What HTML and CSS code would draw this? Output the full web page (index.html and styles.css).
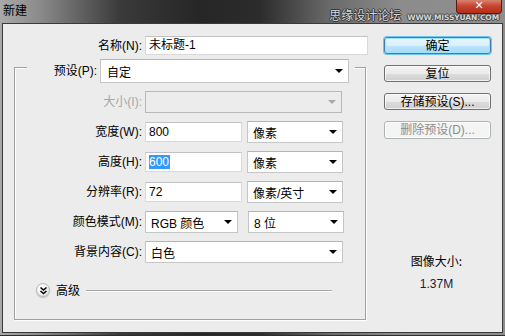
FILE: index.html
```html
<!DOCTYPE html>
<html lang="zh">
<head>
<meta charset="utf-8">
<title>新建</title>
<link rel="stylesheet" href="styles.css">
</head>
<body>
<div class="window">
  <div class="titlebar">
    <span class="title">新建</span>
    <span class="watermark"><span class="wm-cn">思缘设计论坛</span><span class="wm-en">WWW.MISSYUAN.COM</span></span>
    <span class="close">✕</span>
  </div>
  <div class="client">
    <div class="left">
      <div class="row name-row">
        <label class="lbl">名称(N):</label>
        <div class="input w-name">未标题-1</div>
      </div>
      <div class="group">
        <div class="preset-row">
          <label class="lbl">预设(P):</label>
          <div class="select w-preset"><span>自定</span><i class="arrow"></i></div>
        </div>
        <div class="row grow">
          <label class="lbl disabled">大小(I):</label>
          <div class="select w-size disabled-box"><span></span><i class="arrow grey"></i></div>
        </div>
        <div class="row grow">
          <label class="lbl">宽度(W):</label>
          <div class="input w-num">800</div>
          <div class="select w-unit"><span>像素</span><i class="arrow"></i></div>
        </div>
        <div class="row grow">
          <label class="lbl">高度(H):</label>
          <div class="input w-num"><span class="sel">600</span><span class="caret"></span></div>
          <div class="select w-unit"><span>像素</span><i class="arrow"></i></div>
        </div>
        <div class="row grow">
          <label class="lbl">分辨率(R):</label>
          <div class="input w-num">72</div>
          <div class="select w-unit"><span>像素/英寸</span><i class="arrow"></i></div>
        </div>
        <div class="row grow">
          <label class="lbl">颜色模式(M):</label>
          <div class="select w-mode"><span>RGB 颜色</span><i class="arrow"></i></div>
          <div class="select w-unit gap10"><span>8 位</span><i class="arrow"></i></div>
        </div>
        <div class="row grow">
          <label class="lbl">背景内容(C):</label>
          <div class="select w-bg"><span>白色</span><i class="arrow"></i></div>
        </div>
        <div class="advanced">
          <span class="adv-icon"><svg width="9" height="9" viewBox="0 0 9 9"><path d="M1.5 1.5 L4.5 4 L7.5 1.5 M1.5 5 L4.5 7.5 L7.5 5" fill="none" stroke="#000" stroke-width="1.6"/></svg></span>
          <span class="adv-text">高级</span>
          <span class="adv-line"></span>
        </div>
      </div>
    </div>
    <div class="right">
      <button class="btn default">确定</button>
      <button class="btn">复位</button>
      <button class="btn">存储预设(S)...</button>
      <button class="btn disabled-btn">删除预设(D)...</button>
      <div class="info">
        <div class="info-label">图像大小:</div>
        <div class="info-value">1.37M</div>
      </div>
    </div>
  </div>
</div>
</body>
</html>
```

FILE: styles.css
```css
* { box-sizing: border-box; }
html, body { margin: 0; padding: 0; }
body {
  width: 505px;
  height: 336px;
  overflow: hidden;
  font-family: "Liberation Sans", "Noto Sans CJK SC", sans-serif;
  font-size: 12px;
  color: #000;
}
.window {
  width: 505px;
  height: 336px;
  background: linear-gradient(90deg, #a9a9a9 0px, #8a8a8a 40px, #3a3a3a 120px, #262626 200px, #2c2c2c 260px, #6a6a6a 330px, #8c8c8c 400px, #8e8e8e 505px);
  border-bottom: 1px solid #2e2e2e;
  display: flex;
  flex-direction: column;
}
.titlebar {
  height: 23px;
  display: flex;
  align-items: flex-start;
  position: relative;
}
.title {
  margin: 3px 0 0 3px;
  font-size: 12px;
  line-height: 14px;
  color: #000;
  font-family: "Noto Sans CJK SC", sans-serif;
}
.watermark {
  margin-left: auto;
  margin-top: 7px;
  display: flex;
  align-items: baseline;
  gap: 6px;
  margin-right: 6px;
}
.wm-cn {
  font-family: "Noto Sans CJK SC", sans-serif;
  font-size: 12px;
  line-height: 15px;
  color: #d6d6d6;
  text-shadow: 1px 0 #333, -1px 0 #333, 0 1px #333, 0 -1px #333;
}
.wm-en {
  font-family: "DejaVu Sans", sans-serif;
  font-size: 7.5px;
  font-weight: bold;
  letter-spacing: -0.1px;
  color: #d6d6d6;
  text-shadow: 1px 0 #444, -1px 0 #444, 0 1px #444, 0 -1px #444;
}
.close {
  position: absolute;
  right: 3px;
  top: 0;
  width: 46px;
  height: 14px;
  border: 1px solid #5a1a12;
  border-top: none;
  border-radius: 0 0 4px 4px;
  background: linear-gradient(#d9826f 0px, #c5452f 6px, #b22a17 14px);
  color: #fff;
  font-family: "DejaVu Sans", sans-serif;
  font-weight: bold;
  font-size: 11px;
  line-height: 12px;
  text-align: center;
}
.client {
  margin-left: 2px;
  width: 501px;
  height: 310px;
  border: 1px solid #3a3a3a;
  background: #ececec;
  display: flex;
}
.left {
  width: 366px;
  padding-left: 11px;
}
.row {
  display: flex;
  align-items: center;
}
.lbl {
  text-align: right;
  white-space: nowrap;
  line-height: 14px;
  font-family: "Liberation Sans", "Noto Sans CJK SC", sans-serif;
}
.name-row { margin-top: 12px; height: 19px; }
.name-row .lbl { width: 128px; margin-right: 3px; }
.input {
  height: 19px;
  background: #fff;
  border: 1px solid #d9d9d9;
  border-top-color: #c2c2c2;
  padding-left: 3px;
  line-height: 17px;
  white-space: nowrap;
  display: flex;
  align-items: center;
}
.w-name { width: 223px; }
.w-num { width: 97px; height: 20px; }
.sel { background: #3399ff; color: #fff; line-height: 14px; }
.caret { width: 1px; height: 14px; background: #e07020; }
.group {
  margin-top: 12px;
  width: 352px;
  height: 253px;
  border: 1px solid #a0a0a0;
  box-shadow: inset 1px 1px 0 #fff, 1px 1px 0 #fff;
  display: flex;
  flex-direction: column;
}
.preset-row {
  margin: -9px 0 0 12px;
  width: 328px;
  height: 24px;
  background: #ececec;
  display: flex;
  align-items: center;
  padding-right: 6px;
}
.preset-row .lbl { width: 70px; margin-right: 3px; }
.select {
  height: 22px;
  background: #fff;
  border: 1px solid #c6c6c6;
  border-top-color: #b4b4b4;
  display: flex;
  align-items: center;
  justify-content: space-between;
  padding: 0 5px 0 5px;
  white-space: nowrap;
  font-family: "Liberation Sans", "Noto Sans CJK SC", sans-serif;
}
.w-preset { width: 249px; height: 24px; padding-left: 6px; }
.arrow {
  width: 0; height: 0;
  border-left: 4px solid transparent;
  border-right: 4px solid transparent;
  border-top: 4px solid #000;
}
.arrow.grey { border-top-color: #a8a8a8; }
.grow { margin-top: 8px; height: 22px; }
.grow .lbl { width: 127px; margin-right: 3px; }
.lbl.disabled { color: #a6a6a6; }
.disabled-box { background: #ececec; border-color: #b9b9b9; }
.w-size { width: 197px; }
.w-unit { width: 96px; margin-left: 5px; }
.w-unit.gap10 { margin-left: 10px; }
.w-mode { width: 93px; }
.w-bg { width: 198px; }
.advanced {
  margin-top: 20px;
  height: 14px;
  display: flex;
  align-items: center;
  padding-left: 21px;
}
.adv-icon {
  width: 14px; height: 14px;
  border-radius: 50%;
  border: 1px solid #b8b8b8;
  background: radial-gradient(circle at 40% 35%, #ffffff 0, #f2f2f2 50%, #d8d8d8 100%);
  box-shadow: 0 1px 1px #bdbdbd;
  display: flex;
  align-items: center;
  justify-content: center;
}
.adv-icon svg { display: block; }
.adv-text {
  margin-left: 6px;
  font-family: "Noto Sans CJK SC", sans-serif;
  line-height: 14px;
}
.adv-line {
  margin-left: 6px;
  width: 246px;
  height: 1px;
  background: #a8a8a8;
  box-shadow: 0 1px 0 #fff;
}
.right {
  margin-left: 15px;
  width: 107px;
  display: flex;
  flex-direction: column;
  padding-top: 13px;
}
.btn {
  width: 107px;
  height: 17px;
  margin: 0 0 11px 0;
  padding: 0;
  border: 1px solid #707070;
  border-radius: 3px;
  background: linear-gradient(#f3f3f3 0%, #ebebeb 50%, #dddddd 51%, #cfcfcf 100%);
  font-family: "Liberation Sans", "Noto Sans CJK SC", sans-serif;
  font-size: 12px;
  line-height: 14px;
  color: #000;
  box-shadow: inset 0 0 0 1px rgba(255,255,255,0.7);
}
.btn.default {
  border-color: #3c7fb1;
  background: linear-gradient(#e8f6fd 0%, #d9f0fc 50%, #bee6fd 51%, #a7d9f5 100%);
  box-shadow: 0 0 0 1px #6fc4f0, inset 0 0 0 1px #9ee2f8;
}
.btn.disabled-btn {
  border-color: #adb2b5;
  background: #f4f4f4;
  color: #8d8d8d;
  height: 18px;
}
.info {
  margin-top: 104px;
  text-align: center;
  margin-left: -2px;
}
.info-label {
  font-family: "Noto Sans CJK SC", sans-serif;
  line-height: 14px;
}
.info-value {
  margin-top: 9px;
  line-height: 14px;
  color: #1a1a3a;
}
```
